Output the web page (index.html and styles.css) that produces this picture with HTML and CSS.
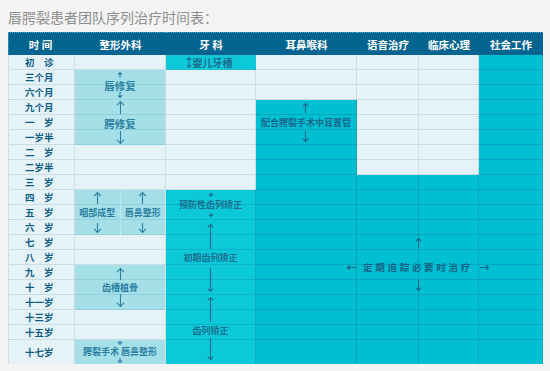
FILE: index.html
```html
<!DOCTYPE html>
<html lang="zh-CN">
<head>
<meta charset="utf-8">
<title>唇腭裂患者团队序列治疗时间表</title>
<link rel="stylesheet" href="styles.css">
</head>
<body>
<div class="page">
  <h1 class="title">唇腭裂患者团队序列治疗时间表：</h1>
  <div class="chart">
    <div class="hd hd-first">时 间</div>
    <div class="hd">整形外科</div>
    <div class="hd">牙 科</div>
    <div class="hd">耳鼻喉科</div>
    <div class="hd">语音治疗</div>
    <div class="hd">临床心理</div>
    <div class="hd">社会工作</div>

    <div class="times">
      <div class="t">初　诊</div>
      <div class="t">三个月</div>
      <div class="t">六个月</div>
      <div class="t">九个月</div>
      <div class="t">一　岁</div>
      <div class="t">一岁半</div>
      <div class="t">二　岁</div>
      <div class="t">二岁半</div>
      <div class="t">三　岁</div>
      <div class="t">四　岁</div>
      <div class="t">五　岁</div>
      <div class="t">六　岁</div>
      <div class="t">七　岁</div>
      <div class="t">八　岁</div>
      <div class="t">九　岁</div>
      <div class="t">十　岁</div>
      <div class="t">十一岁</div>
      <div class="t">十三岁</div>
      <div class="t">十五岁</div>
      <div class="t">十七岁</div>
    </div>

    <!-- 整形外科 -->
    <div class="seg light p-a"></div>
    <div class="seg mid p-b">
      <svg class="ar" width="6" height="6" viewBox="0 0 6 6"><path d="M3 .5V6M.9 2.6L3 .5l2.1 2.1"/></svg>
      <span class="lbl big lip">唇修复</span>
      <svg class="ar" width="6" height="6" viewBox="0 0 6 6"><path d="M3 0v5.5M.9 3.4L3 5.5l2.1-2.1"/></svg>
    </div>
    <div class="seg mid p-c">
      <svg class="ar" width="9" height="13" viewBox="0 0 9 13"><path d="M4.5 .6V13M1 4.1L4.5 .6 8 4.1"/></svg>
      <span class="lbl big pal">腭修复</span>
      <svg class="ar" width="9" height="13" viewBox="0 0 9 13"><path d="M4.5 0v12.4M1 8.9l3.5 3.5L8 8.9"/></svg>
    </div>
    <div class="seg light p-d"></div>
    <div class="seg mid p-e">
      <div class="half half-l">
        <svg class="ar" width="9" height="12" viewBox="0 0 9 12"><path d="M4.5 .6V12M1 4.1L4.5 .6 8 4.1"/></svg>
        <span class="lbl ph">咽部成型</span>
        <svg class="ar" width="9" height="10" viewBox="0 0 9 10"><path d="M4.5 0v9.4M1 5.9l3.5 3.5L8 5.9"/></svg>
      </div>
      <div class="half">
        <svg class="ar" width="9" height="12" viewBox="0 0 9 12"><path d="M4.5 .6V12M1 4.1L4.5 .6 8 4.1"/></svg>
        <span class="lbl ph">唇鼻整形</span>
        <svg class="ar" width="9" height="10" viewBox="0 0 9 10"><path d="M4.5 0v9.4M1 5.9l3.5 3.5L8 5.9"/></svg>
      </div>
    </div>
    <div class="seg light p-f"></div>
    <div class="seg mid p-g">
      <svg class="ar" width="9" height="12" viewBox="0 0 9 12"><path d="M4.5 .6V12M1 4.1L4.5 .6 8 4.1"/></svg>
      <span class="lbl bone">齿槽植骨</span>
      <svg class="ar" width="9" height="13" viewBox="0 0 9 13"><path d="M4.5 0v12.4M1 8.9l3.5 3.5L8 8.9"/></svg>
    </div>
    <div class="seg light p-h"></div>
    <div class="seg mid p-i">
      <svg class="ar" width="6" height="4" viewBox="0 0 6 4"><path d="M3 .5V4M1 2.5L3 .5l2 2"/></svg>
      <span class="lbl last">腭裂手术 唇鼻整形</span>
      <svg class="ar" width="6" height="5" viewBox="0 0 6 5"><path d="M3 0v4.5M1 2.5l2 2 2-2"/></svg>
    </div>

    <!-- 牙科 -->
    <div class="seg cyan3 d-a">
      <svg class="ar" width="6" height="11" viewBox="0 0 6 11"><path d="M3 .6v9.8M.8 2.8L3 .6l2.2 2.2M.8 8.2L3 10.4l2.2-2.2"/></svg>
      <span class="lbl infant">婴儿牙槽</span>
    </div>
    <div class="seg light d-b"></div>
    <div class="seg cyan2 d-c tobottom">
      <svg class="ar" width="6" height="4" viewBox="0 0 6 4"><path d="M3 .5V4M1 2.5L3 .5l2 2"/></svg>
      <span class="lbl g1">预防性齿列矫正</span>
      <svg class="ar" width="6" height="4" viewBox="0 0 6 4"><path d="M3 0v3.5M1 1.5l2 2 2-2"/></svg>
      <svg class="ar g2u" width="7" height="25" viewBox="0 0 7 25"><path d="M3.5 .6V25M.7 3.4L3.5.6l2.8 2.8"/></svg>
      <span class="lbl g2">初期齿列矫正</span>
      <svg class="ar" width="7" height="24" viewBox="0 0 7 24"><path d="M3.5 0v23.4M.7 20.6l2.8 2.8 2.8-2.8"/></svg>
      <svg class="ar g3u" width="7" height="25" viewBox="0 0 7 25"><path d="M3.5 .6V25M.7 3.4L3.5.6l2.8 2.8"/></svg>
      <span class="lbl g3">齿列矫正</span>
      <svg class="ar" width="7" height="22" viewBox="0 0 7 22"><path d="M3.5 0v21.4M.7 18.6l2.8 2.8 2.8-2.8"/></svg>
    </div>

    <!-- 耳鼻喉科 -->
    <div class="seg light e-a"></div>
    <div class="seg cyan e-b tobottom">
      <div class="ent">
        <svg class="ar" width="7" height="10" viewBox="0 0 7 10"><path d="M3.5 .6V10M.7 3.4L3.5.6l2.8 2.8"/></svg>
        <span class="lbl entl">配合腭裂手术中耳置管</span>
        <svg class="ar" width="7" height="11" viewBox="0 0 7 11"><path d="M3.5 0v10.4M.7 7.6l2.8 2.8 2.8-2.8"/></svg>
      </div>
    </div>

    <!-- 语音治疗 -->
    <div class="seg light v-a"></div>
    <div class="seg cyan v-b tobottom"></div>

    <!-- 临床心理 -->
    <div class="seg light x-a"></div>
    <div class="seg cyan x-b tobottom"></div>

    <!-- 社会工作 -->
    <div class="seg cyan s-a tobottom"></div>

    <!-- 定期追踪 -->
    <div class="follow">
      <svg class="ar" width="7" height="10" viewBox="0 0 7 10"><path d="M3.5 .6V10M.7 3.4L3.5.6l2.8 2.8"/></svg>
      <div class="follow-row">
        <svg class="ar" width="9" height="5" viewBox="0 0 9 5"><path d="M.6 2.5H9M3 .2L.6 2.5 3 4.8"/></svg>
        <span class="follow-text">定期追踪必要时治疗</span>
        <svg class="ar" width="9" height="5" viewBox="0 0 9 5"><path d="M0 2.5h8.4M6 .2l2.4 2.3L6 4.8"/></svg>
      </div>
      <svg class="ar" width="7" height="11" viewBox="0 0 7 11"><path d="M3.5 0v10.4M.7 7.6l2.8 2.8 2.8-2.8"/></svg>
    </div>
  </div>
</div>
</body>
</html>
```

FILE: styles.css
```css
* { box-sizing: border-box; }
html, body { margin: 0; padding: 0; }
body {
  background: #f4f4f4;
  font-family: "Noto Sans CJK SC", "Noto Sans", sans-serif;
  overflow: hidden;
}
.page { padding: 0 0 0 8px; }
.title {
  margin: 0;
  height: 32px;
  padding-top: 10px;
  font-size: 14px;
  line-height: 14px;
  font-weight: normal;
  color: #8d8d8d;
  white-space: nowrap;
}

.chart {
  display: grid;
  grid-template-columns: 67px 91px 90px 101px 62px 60px 64px;
  grid-template-rows: 23px repeat(19, 15px) 24px;
  width: 535px;
}

.hd {
  background: #03648f;
  color: #fff;
  font-weight: bold;
  font-size: 10.5px;
  display: flex;
  align-items: center;
  justify-content: center;
  border-top: 1px dotted #4aa9c6;
  white-space: pre;
}
.hd-first { border-left: 1px dotted #4aa9c6; padding-right: 3px; }

.times {
  grid-column: 1;
  grid-row: 2 / 22;
  display: flex;
  flex-direction: column;
  background: #e5f3f8;
  border-right: 1px solid #c9dde4;
  border-left: 1px dotted #b6d2db;
}
.t {
  flex: none;
  height: 15px;
  border-bottom: 1px solid #c9dde4;
  font-size: 9.5px;
  line-height: 14px;
  font-weight: bold;
  color: #0e5b86;
  padding-left: 16px;
  white-space: pre;
}
.t:last-child { height: 24px; line-height: 24px; border-bottom: 0; }

.seg {
  display: flex;
  flex-direction: column;
  align-items: center;
  justify-content: center;
  border-right: 1px solid #c9dde4;
}
.light {
  background-color: #e5f3f8;
  background-image: repeating-linear-gradient(to bottom, transparent 0 14px, #c9dde4 14px 15px);
}
.mid {
  background-color: #a5dfe8;
  background-image: repeating-linear-gradient(to bottom, transparent 0 14px, #8fd0dc 14px 15px);
  color: #2a7fa1;
}
.cyan {
  background-color: #00bfd3;
  background-image: repeating-linear-gradient(to bottom, transparent 0 14px, #03a5bb 14px 15px);
  border-right-color: #04a0b6;
  color: #1b6689;
}
.cyan2 {
  background-color: #0bc9d9;
  background-image: repeating-linear-gradient(to bottom, transparent 0 14px, #0bb1c5 14px 15px);
  border-right: 1px dotted #0795ad;
  color: #1c6d8e;
}
.cyan3 {
  background-color: #0cc9d9;
  border: 1px dotted #3cb7c9;
  color: #1c6a8c;
}
.tobottom {
  background-size: 100% calc(100% - 24px);
  background-repeat: no-repeat;
}

.p-a { grid-column: 2; grid-row: 2 / 3; }
.p-b { grid-column: 2; grid-row: 3 / 5; }
.p-c { grid-column: 2; grid-row: 5 / 8; }
.p-d { grid-column: 2; grid-row: 8 / 11; }
.p-e { grid-column: 2; grid-row: 11 / 14; flex-direction: row; align-items: stretch; }
.p-f { grid-column: 2; grid-row: 14 / 16; }
.p-g { grid-column: 2; grid-row: 16 / 19; }
.p-h { grid-column: 2; grid-row: 19 / 21; }
.p-i { grid-column: 2; grid-row: 21 / 22; background-image: none; }

.d-a { grid-column: 3; grid-row: 2 / 3; flex-direction: row; gap: 1px; padding-right: 4px; }
.d-b { grid-column: 3; grid-row: 3 / 11; }
.d-c { grid-column: 3; grid-row: 11 / 22; justify-content: flex-start; padding-top: 3px; }

.e-a { grid-column: 4; grid-row: 2 / 5; }
.e-b { grid-column: 4; grid-row: 5 / 22; justify-content: flex-start; }

.v-a { grid-column: 5; grid-row: 2 / 10; }
.v-b { grid-column: 5; grid-row: 10 / 22; }
.x-a { grid-column: 6; grid-row: 2 / 10; border-right: 1px dotted #a9c6d0; }
.x-b { grid-column: 6; grid-row: 10 / 22; border-right: 1px dotted #0a8fa8; }
.s-a { grid-column: 7; grid-row: 2 / 22; border-right-color: #07a8bd; }

.half {
  flex: 1;
  display: flex;
  flex-direction: column;
  align-items: center;
  justify-content: center;
}
.half-l { border-right: 1px dotted #d2f0f4; }

.ar { display: block; flex: none; }
.ar path { fill: none; stroke: currentColor; stroke-width: 1.1; }
.lbl {
  display: block;
  font-size: 9px;
  line-height: 9px;
  font-weight: bold;
  white-space: pre;
}
.big { font-size: 10.5px; line-height: 11px; }
.lip { margin: 2px 0 1px; }
.pal { margin: 4px 0 2px; }
.ph { margin: 4px 0 6px; }
.bone { margin: 3px 0 2px; }
.last { margin: 2px 0 2px; }
.infant { font-size: 10px; line-height: 10px; }

.g1 { margin: 3px 0 4px; }
.g2u { margin-top: 7px; }
.g2 { margin: 4px 0 6px; }
.g3u { margin-top: 5px; }
.g3 { margin: 4px 0 3px; }

.ent {
  height: 45px;
  display: flex;
  flex-direction: column;
  align-items: center;
  justify-content: center;
}
.entl { margin: 5px 0 4px; }

.follow {
  grid-column: 5 / 7;
  grid-row: 10 / 22;
  display: flex;
  flex-direction: column;
  align-items: center;
  padding-top: 63px;
  color: #176285;
}
.follow-row {
  display: flex;
  align-items: center;
  gap: 7px;
  margin: 14px 0 8px;
  white-space: nowrap;
}
.follow-text {
  font-size: 9.5px;
  line-height: 10px;
  letter-spacing: 2.7px;
  font-weight: bold;
}
```
